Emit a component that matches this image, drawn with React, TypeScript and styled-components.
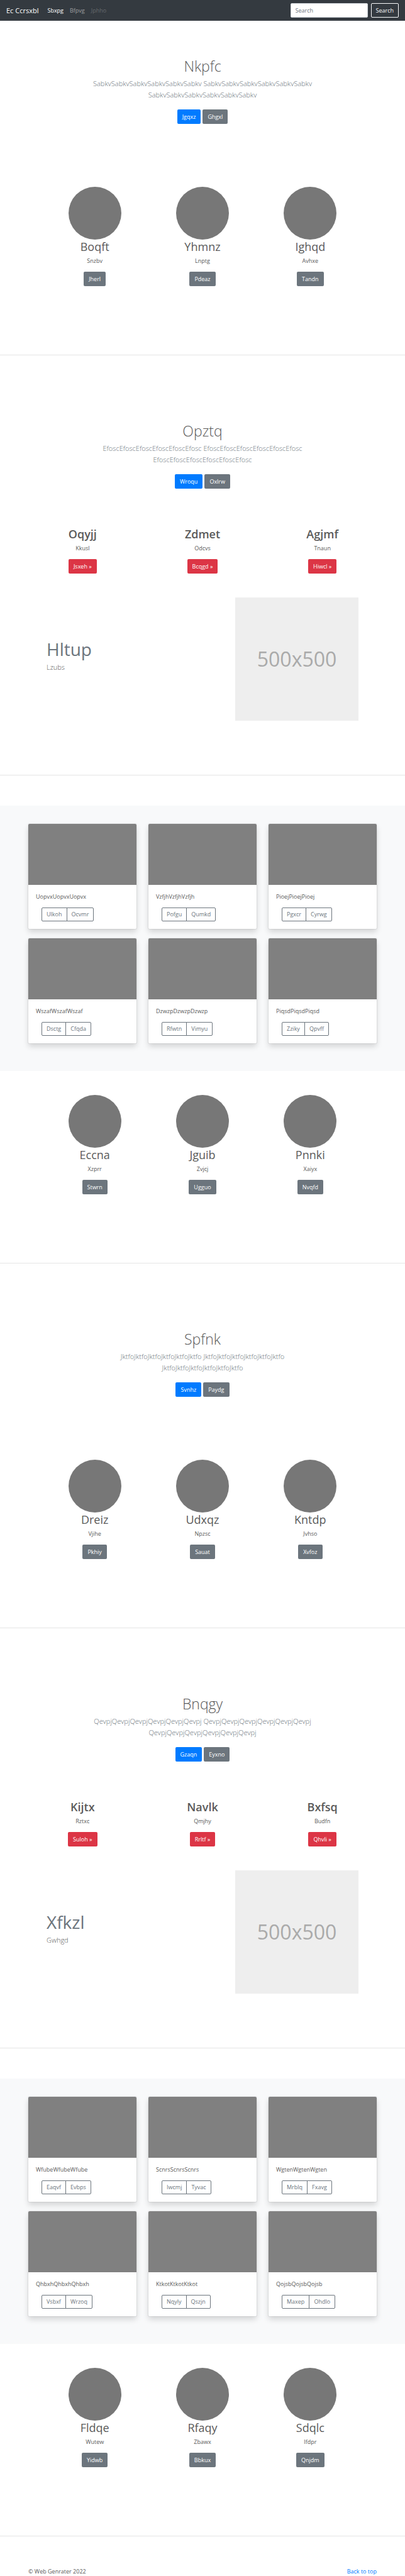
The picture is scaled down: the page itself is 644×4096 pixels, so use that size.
import React from 'react';
import styled, { createGlobalStyle } from 'styled-components';

const GlobalStyle = createGlobalStyle`
  *, *::before, *::after { box-sizing: border-box; }
  body {
    margin: 0;
    background: #fff;
    color: #5a5a5a;
    font-family: 'Segoe UI', 'Open Sans', 'Noto Sans', sans-serif;
    font-size: 9px;
    line-height: 14px;
  }
  h1, h2, p { margin: 0; }
  button, input { font: inherit; margin: 0; }
`;

const tones = {
  primary: '#007bff',
  secondary: '#6c757d',
  danger: '#dc3545',
};

const NavBar = styled.header`
  display: flex;
  align-items: center;
  justify-content: space-between;
  height: 33px;
  padding: 0 10px;
  background: #343a40;
`;

const NavGroup = styled.nav`
  display: flex;
  align-items: center;
`;

const Brand = styled.a`
  margin-right: 14px;
  color: #fff;
  font-size: 11px;
  line-height: 18px;
  text-decoration: none;
`;

const NavLink = styled.a<{ $alpha: number }>`
  margin-right: 10px;
  color: rgba(255, 255, 255, ${(p) => p.$alpha});
  text-decoration: none;
`;

const SearchForm = styled.form`
  display: flex;
  gap: 5px;
`;

const SearchInput = styled.input`
  width: 123px;
  height: 23px;
  padding: 0 7px;
  border: 1px solid #ced4da;
  border-radius: 2px;
  background: #fff;
  color: #495057;
  &::placeholder { color: #6c757d; opacity: 1; }
`;

const SearchButton = styled.button`
  height: 23px;
  padding: 0 7px;
  border: 1px solid #f8f9fa;
  border-radius: 2px;
  background: transparent;
  color: #f8f9fa;
`;

const Hero = styled.section<{ $gap: number }>`
  padding: 58px 40px ${(p) => p.$gap}px;
  text-align: center;
`;

const HeroTitle = styled.h1`
  margin-bottom: 5px;
  font-size: 23px;
  font-weight: 300;
  line-height: 28px;
`;

const Lead = styled.p`
  max-width: 380px;
  margin: 0 auto 14px;
  color: #6c757d;
  font-size: 11px;
  font-weight: 300;
  line-height: 18px;
`;

const ButtonRow = styled.div`
  display: flex;
  justify-content: center;
  gap: 3px;
`;

const Button = styled.button<{ $tone: keyof typeof tones }>`
  height: 23px;
  padding: 0 8px;
  border: 0;
  border-radius: 2px;
  background: ${(p) => tones[p.$tone]};
  color: #fff;
`;

const Row = styled.section<{ $side: number; $bottom: number }>`
  display: grid;
  grid-template-columns: repeat(3, 1fr);
  padding: 0 ${(p) => p.$side}px ${(p) => p.$bottom}px;
`;

const Column = styled.div`
  display: flex;
  flex-direction: column;
  align-items: center;
`;

const Avatar = styled.div`
  width: 84px;
  height: 84px;
  border-radius: 50%;
  background: #777;
`;

const ColumnTitle = styled.h2<{ $weight: number }>`
  margin-bottom: 4px;
  font-size: 18px;
  font-weight: ${(p) => p.$weight};
  line-height: 23px;
`;

const ColumnText = styled.p`
  margin-bottom: 10px;
`;

const Divider = styled.hr`
  height: 1px;
  margin: 0 0 48px;
  border: 0;
  background: rgba(0, 0, 0, 0.1);
`;

const Feature = styled.section`
  display: flex;
  align-items: center;
  justify-content: space-between;
  padding: 0 74px 86px;
`;

const FeatureText = styled.div`
  padding-bottom: 12px;
`;

const FeatureTitle = styled.h2`
  margin-bottom: 2px;
  color: #6c757d;
  font-size: 28px;
  font-weight: 400;
  line-height: 36px;
`;

const FeatureLead = styled.p`
  font-size: 11px;
  font-weight: 300;
  line-height: 18px;
`;

const Placeholder = styled.div`
  display: flex;
  align-items: center;
  justify-content: center;
  width: 196px;
  aspect-ratio: 1;
  background: #eee;
  color: #aaa;
  font-size: 32px;
  line-height: 40px;
`;

const Album = styled.section`
  display: grid;
  grid-template-columns: repeat(3, 1fr);
  gap: 15px 19px;
  margin-bottom: 38px;
  padding: 29px 45px 44px;
  background: #f8f9fa;
`;

const Card = styled.article`
  overflow: hidden;
  border-radius: 2px;
  background: #fff;
  box-shadow: 0 0 0 1px rgba(0, 0, 0, 0.06), 0 5px 10px rgba(0, 0, 0, 0.15);
`;

const CardImage = styled.div`
  height: 97px;
  background: #808080;
`;

const CardBody = styled.div`
  padding: 12px;
`;

const CardText = styled.p`
  margin-bottom: 10px;
`;

const ButtonGroup = styled.div`
  display: flex;
  margin-left: 9px;
`;

const GroupButton = styled.button`
  height: 22px;
  padding: 0 7px;
  border: 1px solid #6c757d;
  background: transparent;
  color: #6c757d;
  &:first-child { border-radius: 2px 0 0 2px; }
  &:last-child { margin-left: -1px; border-radius: 0 2px 2px 0; }
`;

const Footer = styled.footer`
  display: flex;
  justify-content: space-between;
  padding: 0 45px;
  line-height: 15px;
`;

const TopLink = styled.a`
  color: #007bff;
  text-decoration: none;
`;

type Trio = [string, string, string];

function Intro({ title, word, actions, gap }: { title: string; word: string; actions: [string, string]; gap: number }) {
  const run = word.repeat(6);
  return (
    <Hero $gap={gap}>
      <HeroTitle>{title}</HeroTitle>
      <Lead>{run} {run} {run}</Lead>
      <ButtonRow>
        <Button type="button" $tone="primary">{actions[0]}</Button>
        <Button type="button" $tone="secondary">{actions[1]}</Button>
      </ButtonRow>
    </Hero>
  );
}

function People({ items }: { items: Trio[] }) {
  return (
    <>
      <Row $side={65} $bottom={109}>
        {items.map(([name, text, action]) => (
          <Column key={name}>
            <Avatar />
            <ColumnTitle $weight={400}>{name}</ColumnTitle>
            <ColumnText>{text}</ColumnText>
            <Button type="button" $tone="secondary">{action}</Button>
          </Column>
        ))}
      </Row>
      <Divider />
    </>
  );
}

function Highlights({ items }: { items: Trio[] }) {
  return (
    <Row $side={36} $bottom={38}>
      {items.map(([name, text, action]) => (
        <Column key={name}>
          <ColumnTitle $weight={600}>{name}</ColumnTitle>
          <ColumnText>{text}</ColumnText>
          <Button type="button" $tone="danger">{action} »</Button>
        </Column>
      ))}
    </Row>
  );
}

function Featurette({ title, text }: { title: string; text: string }) {
  return (
    <>
      <Feature>
        <FeatureText>
          <FeatureTitle>{title}</FeatureTitle>
          <FeatureLead>{text}</FeatureLead>
        </FeatureText>
        <Placeholder>500x500</Placeholder>
      </Feature>
      <Divider />
    </>
  );
}

function Cards({ items }: { items: Trio[] }) {
  return (
    <Album>
      {items.map(([word, first, second]) => (
        <Card key={word}>
          <CardImage />
          <CardBody>
            <CardText>{word.repeat(3)}</CardText>
            <ButtonGroup>
              <GroupButton type="button">{first}</GroupButton>
              <GroupButton type="button">{second}</GroupButton>
            </ButtonGroup>
          </CardBody>
        </Card>
      ))}
    </Album>
  );
}

export default function App() {
  return (
    <>
      <GlobalStyle />
      <NavBar id="top">
        <NavGroup>
          <Brand href="#top">Ec Ccrsxbl</Brand>
          <NavLink href="#top" $alpha={1}>Sbxpg</NavLink>
          <NavLink href="#top" $alpha={0.5}>Bfpvg</NavLink>
          <NavLink href="#top" $alpha={0.25}>Jphho</NavLink>
        </NavGroup>
        <SearchForm>
          <SearchInput type="search" placeholder="Search" aria-label="Search" />
          <SearchButton type="button">Search</SearchButton>
        </SearchForm>
      </NavBar>
      <main>
        <Intro title="Nkpfc" word="Sabkv" actions={['Jgqxz', 'Ghgxl']} gap={100} />
        <People items={[['Boqft', 'Snzbv', 'Jherl'], ['Yhmnz', 'Lnptg', 'Pdeaz'], ['Ighqd', 'Avhxe', 'Tandn']]} />
        <Intro title="Opztq" word="Efosc" actions={['Wroqu', 'Oxlrw']} gap={61} />
        <Highlights items={[['Oqyjj', 'Kkusl', 'Jsxeh'], ['Zdmet', 'Odcvs', 'Bcqgd'], ['Agjmf', 'Tnaun', 'Hiwcl']]} />
        <Featurette title="Hltup" text="Lzubs" />
        <Cards
          items={[
            ['Uopvx', 'Ulkoh', 'Ocvmr'],
            ['Vzfjh', 'Pofgu', 'Qumkd'],
            ['Pioej', 'Pgxcr', 'Cyrwg'],
            ['Wszaf', 'Dsctg', 'Cfqda'],
            ['Dzwzp', 'Rfwtn', 'Vimyu'],
            ['Piqsd', 'Zziky', 'Qpvff'],
          ]}
        />
        <People items={[['Eccna', 'Xzprr', 'Stwrn'], ['Jguib', 'Zvjcj', 'Ugguo'], ['Pnnki', 'Xaiyx', 'Nvqfd']]} />
        <Intro title="Spfnk" word="Jktfo" actions={['Svnhz', 'Paydg']} gap={100} />
        <People items={[['Dreiz', 'Vjihe', 'Pkhiy'], ['Udxqz', 'Npzsc', 'Sauat'], ['Kntdp', 'Jvhso', 'Xvfoz']]} />
        <Intro title="Bnqgy" word="Qevpj" actions={['Gzaqn', 'Eyxno']} gap={61} />
        <Highlights items={[['Kijtx', 'Rztxc', 'Suloh'], ['Navlk', 'Qmjhy', 'Rrltf'], ['Bxfsq', 'Budfn', 'Qhvli']]} />
        <Featurette title="Xfkzl" text="Gwhgd" />
        <Cards
          items={[
            ['Wfube', 'Eaqvf', 'Evbps'],
            ['Scnrs', 'Iwcmj', 'Tyvac'],
            ['Wgten', 'Mrblq', 'Fxavg'],
            ['Qhbxh', 'Vsbxf', 'Wrzoq'],
            ['Ktkot', 'Nqyly', 'Qszjn'],
            ['Qojsb', 'Maxep', 'Ohdlo'],
          ]}
        />
        <People items={[['Fldqe', 'Wutew', 'Yidwb'], ['Rfaqy', 'Zbawx', 'Bbkux'], ['Sdqlc', 'Ifdpr', 'Qnjdm']]} />
      </main>
      <Footer>
        <span>© Web Genrater 2022</span>
        <TopLink href="#top">Back to top</TopLink>
      </Footer>
    </>
  );
}
